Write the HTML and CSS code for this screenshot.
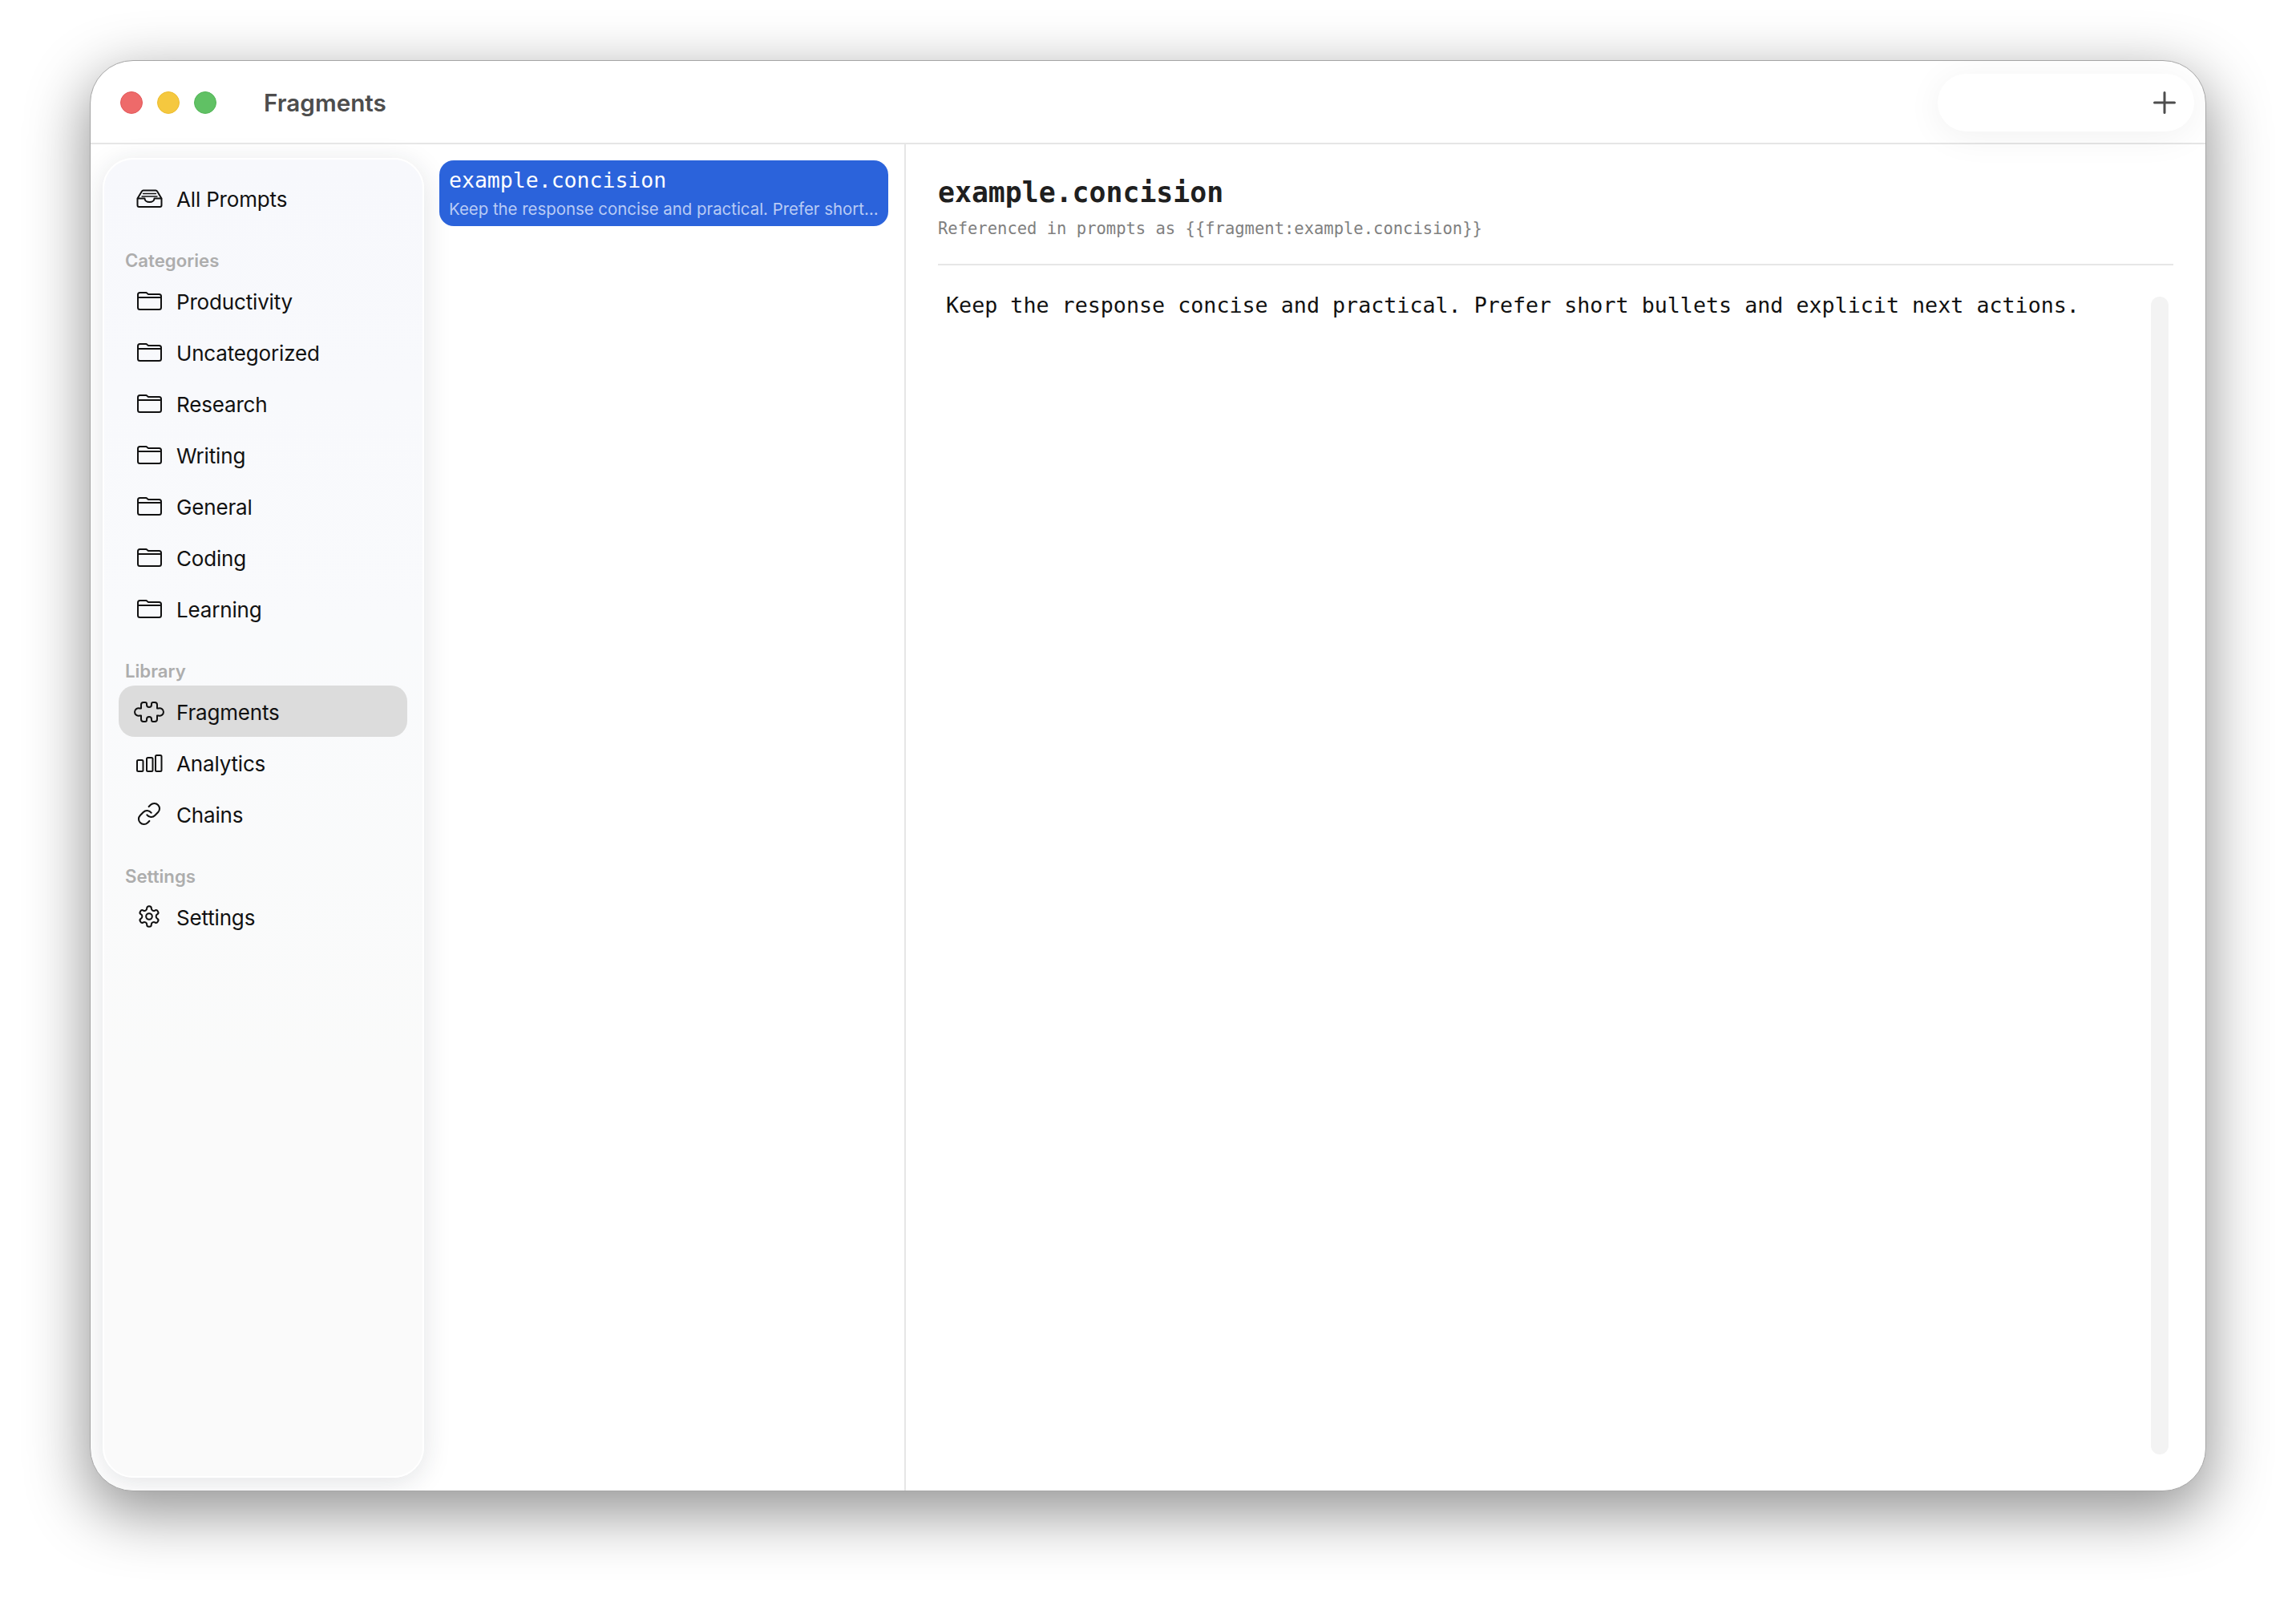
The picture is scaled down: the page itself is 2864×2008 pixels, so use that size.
FILE: index.html
```html
<!DOCTYPE html>
<html lang="en">
<head>
<meta charset="utf-8">
<title>Fragments</title>
<link rel="stylesheet" href="styles.css">
</head>
<body>
<svg class="defs" width="0" height="0" aria-hidden="true">
  <symbol id="i-folder" viewBox="0 0 38 38"><path d="M7.5 30h24a2.500 2.500 0 0 0 2.500-2.500V13.500a2.500 2.500 0 0 0-2.500-2.500H18l-2.500-2H7.500A2.500 2.500 0 0 0 5 11.500v16A2.500 2.500 0 0 0 7.500 30zM5 15h29"/></symbol>
</svg>
<div class="window">
  <header class="titlebar">
    <div class="lights"><span class="light red"></span><span class="light yellow"></span><span class="light green"></span></div>
    <div class="title">Fragments</div>
    <div class="pill"><svg class="plus" viewBox="0 0 28 28"><path d="M14 1.500v25M1.500 14h25"/></svg></div>
  </header>
  <div class="main">
    <aside class="sidebar">
      <div class="row"><svg class="icon" viewBox="0 0 38 38"><path d="M4.500 19.500 10 10.500a2 2 0 0 1 1.700-1h15.600a2 2 0 0 1 1.700 1l5.500 9M4.500 19.500V28a2 2 0 0 0 2 2h26a2 2 0 0 0 2-2v-8.500H25.500c0 2.500-2.500 4.500-6 4.500s-6-2-6-4.500z"/><path class="fine" d="M11.500 13.500h16M10 17h19"/></svg><span>All Prompts</span></div>
      <div class="group">Categories</div>
      <div class="row"><svg class="icon"><use href="#i-folder"/></svg><span>Productivity</span></div>
      <div class="row"><svg class="icon"><use href="#i-folder"/></svg><span>Uncategorized</span></div>
      <div class="row"><svg class="icon"><use href="#i-folder"/></svg><span>Research</span></div>
      <div class="row"><svg class="icon"><use href="#i-folder"/></svg><span>Writing</span></div>
      <div class="row"><svg class="icon"><use href="#i-folder"/></svg><span>General</span></div>
      <div class="row"><svg class="icon"><use href="#i-folder"/></svg><span>Coding</span></div>
      <div class="row"><svg class="icon"><use href="#i-folder"/></svg><span>Learning</span></div>
      <div class="group">Library</div>
      <div class="row active"><svg class="icon" viewBox="0 0 38 38"><path d="M12 8h2a2 2 0 0 1 2 2v1a3 3 0 0 0 6 0v-1a2 2 0 0 1 2-2h2a3 3 0 0 1 3 3v4.500h1.500a4.800 4.800 0 1 1 0 9H29V29a3 3 0 0 1-3 3h-2a2 2 0 0 1-2-2v-1a3 3 0 0 0-6 0v1a2 2 0 0 1-2 2h-2a3 3 0 0 1-3-3v-4.500H7.500a4.800 4.800 0 1 1 0-9H9V11a3 3 0 0 1 3-3z"/></svg><span>Fragments</span></div>
      <div class="row"><svg class="icon" viewBox="0 0 38 38"><rect x="4" y="16" width="7.500" height="14" rx="1.500"/><rect x="16" y="13" width="7.500" height="17" rx="1.500"/><rect x="27" y="10" width="7.500" height="20" rx="1.500"/></svg><span>Analytics</span></div>
      <div class="row"><svg class="icon thin" viewBox="-2.500 -2.500 29 29"><path d="M10 13a5 5 0 0 0 7.540.540l3-3a5 5 0 0 0-7.070-7.070l-1.720 1.710"/><path d="M14 11a5 5 0 0 0-7.540-.540l-3 3a5 5 0 0 0 7.070 7.070l1.710-1.710"/></svg><span>Chains</span></div>
      <div class="group">Settings</div>
      <div class="row"><svg class="icon thin" viewBox="-3 -3 30 30"><path d="M12.220 2h-.440a2 2 0 0 0-2 2v.180a2 2 0 0 1-1 1.730l-.430.250a2 2 0 0 1-2 0l-.150-.080a2 2 0 0 0-2.730.730l-.220.380a2 2 0 0 0 .730 2.730l.150.100a2 2 0 0 1 1 1.720v.510a2 2 0 0 1-1 1.740l-.150.090a2 2 0 0 0-.730 2.730l.220.380a2 2 0 0 0 2.730.730l.150-.080a2 2 0 0 1 2 0l.430.250a2 2 0 0 1 1 1.730V20a2 2 0 0 0 2 2h.440a2 2 0 0 0 2-2v-.180a2 2 0 0 1 1-1.730l.430-.250a2 2 0 0 1 2 0l.150.080a2 2 0 0 0 2.730-.730l.220-.390a2 2 0 0 0-.730-2.730l-.150-.080a2 2 0 0 1-1-1.740v-.500a2 2 0 0 1 1-1.740l.150-.090a2 2 0 0 0 .730-2.730l-.220-.380a2 2 0 0 0-2.730-.730l-.150.080a2 2 0 0 1-2 0l-.430-.250a2 2 0 0 1-1-1.730V4a2 2 0 0 0-2-2z"/><circle cx="12" cy="12" r="3"/></svg><span>Settings</span></div>
    </aside>
    <section class="list">
      <div class="card">
        <div class="card-title">example.concision</div>
        <div class="card-sub">Keep the response concise and practical. Prefer short bullets and explicit next actions.</div>
      </div>
    </section>
    <section class="detail">
      <div class="detail-head">
        <h1 class="detail-title">example.concision</h1>
        <p class="detail-ref">Referenced in prompts as {{fragment:example.concision}}</p>
      </div>
      <div class="editor">
        <div class="editor-text">Keep the response concise and practical. Prefer short bullets and explicit next actions.</div>
        <div class="scrollbar"></div>
      </div>
    </section>
  </div>
</div>
</body>
</html>
```

FILE: styles.css
```css
* { box-sizing: border-box; }
html, body { margin: 0; height: 100%; background: #fff; }
body {
  padding: 75px 112px 148px;
  font-family: "Inter", "Liberation Sans", sans-serif;
  overflow: hidden;
}
.defs { position: absolute; }

.window {
  height: 1785px;
  display: flex;
  flex-direction: column;
  background: #fff;
  border: 1px solid #a6a6a6;
  border-radius: 54px;
  box-shadow: 0 24px 74px 4px rgba(0, 0, 0, .42);
  overflow: hidden;
}

.titlebar {
  flex: none;
  height: 104px;
  display: flex;
  align-items: center;
  padding: 2px 14px 0 37px;
  border-bottom: 2px solid #e6e6e6;
  position: relative;
  z-index: 1;
}
.lights { display: flex; gap: 18px; }
.light { width: 28px; height: 28px; border-radius: 50%; border: 1px solid; }
.red { background: #ee6a6a; border-color: #e2585a; }
.yellow { background: #f5c83f; border-color: #ecbc2f; }
.green { background: #60c164; border-color: #53b558; }
.title {
  margin-left: 59px;
  font-size: 29.700px;
  font-weight: 600;
  color: #4d4d4d;
}
.pill {
  margin-left: auto;
  width: 320px;
  height: 72px;
  display: flex;
  align-items: center;
  justify-content: flex-end;
  padding-right: 23px;
  background: #fff;
  border-radius: 36px;
  box-shadow: 0 6px 46px rgba(0, 0, 0, .06);
}
.plus { width: 28px; height: 28px; fill: none; stroke: #4d4d4d; stroke-width: 3; stroke-linecap: round; }

.main { flex: 1; min-height: 0; display: flex; }

.sidebar {
  flex: none;
  width: 401px;
  margin: 17px 0 16px 15px;
  padding: 16px 19px 0 18px;
  background: linear-gradient(180deg, #f7f8fc 0%, #f9fafc 35%, #fafafa 70%, #fafafa 100%);
  border: 2px solid #fff;
  border-radius: 38px;
  box-shadow: 0 6px 34px rgba(30, 35, 55, .13);
}
.row {
  height: 64px;
  display: flex;
  align-items: center;
  gap: 15px;
  padding-left: 19px;
  border-radius: 20px;
  font-size: 26px;
  letter-spacing: -.17px;
  color: #111;
}
.row span { padding-top: 2px; }
.row.active { background: #dcdcdc; }
.icon {
  flex: none;
  width: 38px;
  height: 38px;
  fill: none;
  stroke: #111;
  stroke-width: 2;
  stroke-linecap: round;
  stroke-linejoin: round;
}
.icon.thin { stroke-width: 1.600; }
.icon .fine { stroke-width: 1.400; }
.group {
  height: 36px;
  margin-top: 28px;
  padding: 0 0 2px 8px;
  display: flex;
  align-items: center;
  font-size: 22.200px;
  font-weight: 600;
  color: #adadad;
}

.list {
  flex: none;
  width: 601px;
  padding: 20px 20px 0 19px;
  border-right: 2px solid #e6e6e6;
}
.card {
  height: 82px;
  padding: 7px 7px 0 12px;
  background: #2b63db;
  border-radius: 18px;
  overflow: hidden;
}
.card-title {
  font-family: "DejaVu Sans Mono", monospace;
  font-size: 26.500px;
  line-height: 36px;
  color: #fff;
}
.card-sub {
  margin-top: 2px;
  font-size: 20.400px;
  line-height: 32px;
  color: #b9cbf5;
  white-space: nowrap;
  overflow: hidden;
  text-overflow: ellipsis;
}

.detail {
  flex: 1;
  min-width: 0;
  display: flex;
  flex-direction: column;
  padding: 0 40px;
}
.detail-head { flex: none; height: 151px; padding-top: 38px; border-bottom: 2px solid #e6e6e6; }
.detail-title {
  margin: 0;
  font-family: "DejaVu Sans Mono", monospace;
  font-size: 34.800px;
  line-height: 44px;
  font-weight: 700;
  color: #1f1f1f;
}
.detail-ref {
  margin: 9px 0 0;
  font-family: "DejaVu Sans Mono", monospace;
  font-size: 20.500px;
  line-height: 28px;
  color: #808080;
}
.editor { flex: 1; min-height: 0; display: flex; justify-content: space-between; padding: 39px 6px 45px 10px; }
.editor-text {
  font-family: "DejaVu Sans Mono", monospace;
  font-size: 26.700px;
  line-height: 22px;
  color: #111;
  white-space: nowrap;
}
.scrollbar { flex: none; width: 22px; background: #f3f3f3; border-radius: 11px; }
```
